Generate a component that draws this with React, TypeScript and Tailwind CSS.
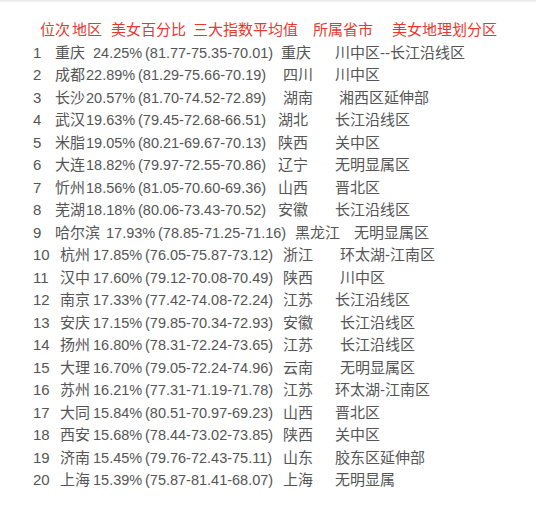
import React from "react";

type Row = [number, string, string, string, string, string, number, number, number, number, number];

const rows: Row[] = [
  [1, "重庆", "24.25%", "(81.77-75.35-70.01)", "重庆", "川中区--长江沿线区", 55, 93, 145, 281, 335],
  [2, "成都", "22.89%", "(81.29-75.66-70.19)", "四川", "川中区", 55, 86, 138, 283, 335],
  [3, "长沙", "20.57%", "(81.70-74.52-72.89)", "湖南", "湘西区延伸部", 55, 86, 138, 283, 339],
  [4, "武汉", "19.63%", "(79.45-72.68-66.51)", "湖北", "长江沿线区", 55, 86, 138, 278, 335],
  [5, "米脂", "19.05%", "(80.21-69.67-70.13)", "陕西", "关中区", 55, 86, 138, 278, 335],
  [6, "大连", "18.82%", "(79.97-72.55-70.86)", "辽宁", "无明显属区", 55, 86, 138, 278, 335],
  [7, "忻州", "18.56%", "(81.05-70.60-69.36)", "山西", "晋北区", 55, 86, 138, 278, 335],
  [8, "芜湖", "18.18%", "(80.06-73.43-70.52)", "安徽", "长江沿线区", 55, 86, 138, 278, 335],
  [9, "哈尔滨", "17.93%", "(78.85-71.25-71.16)", "黑龙江", "无明显属区", 55, 106, 158, 295, 354],
  [10, "杭州", "17.85%", "(76.05-75.87-73.12)", "浙江", "环太湖-江南区", 60, 93, 145, 283, 340],
  [11, "汉中", "17.60%", "(79.12-70.08-70.49)", "陕西", "川中区", 60, 93, 145, 283, 340],
  [12, "南京", "17.33%", "(77.42-74.08-72.24)", "江苏", "长江沿线区", 60, 93, 145, 283, 335],
  [13, "安庆", "17.15%", "(79.85-70.34-72.93)", "安徽", "长江沿线区", 60, 93, 145, 283, 340],
  [14, "扬州", "16.80%", "(78.31-72.24-73.65)", "江苏", "长江沿线区", 60, 93, 145, 283, 340],
  [15, "大理", "16.70%", "(79.05-72.24-74.96)", "云南", "无明显属区", 60, 93, 145, 283, 340],
  [16, "苏州", "16.21%", "(77.31-71.19-71.78)", "江苏", "环太湖-江南区", 60, 93, 145, 283, 335],
  [17, "大同", "15.84%", "(80.51-70.97-69.23)", "山西", "晋北区", 60, 93, 145, 283, 335],
  [18, "西安", "15.68%", "(78.44-73.02-73.85)", "陕西", "关中区", 60, 93, 145, 283, 335],
  [19, "济南", "15.45%", "(79.76-72.43-75.11)", "山东", "胶东区延伸部", 60, 93, 145, 283, 335],
  [20, "上海", "15.39%", "(75.87-81.41-68.07)", "上海", "无明显属", 60, 93, 145, 283, 335],
];

export default function App() {
  return (
    <div
      className="w-[536px] h-[506px] bg-white overflow-hidden text-[15px] leading-[22.5px] text-[#555555]"
      style={{ fontFamily: '"Liberation Sans", "Noto Sans CJK SC", sans-serif' }}
    >
      <div className="h-[3px] bg-gradient-to-b from-[#e6e6e6] to-white" />
      <div className="pt-[16px] pl-[40px] flex text-[#e5392f] whitespace-nowrap">
        <span className="w-[32px]">位次</span>
        <span className="w-[39px]">地区</span>
        <span className="w-[82px]">美女百分比</span>
        <span className="w-[120px]">三大指数平均值</span>
        <span className="w-[79px]">所属省市</span>
        <span>美女地理划分区</span>
      </div>
      <div className="pl-[33px] flex flex-col">
        {rows.map((r) => {
          const [n, city, pct, paren, prov, region, cx, px, parx, provx, regx] = r;
          return (
            <div key={n} className="flex items-baseline whitespace-nowrap">
              <span className="shrink-0" style={{ width: cx - 33 }}>{n}</span>
              <span className="shrink-0" style={{ width: px - cx }}>{city}</span>
              <span className="shrink-0 text-[14.5px]" style={{ width: parx - px }}>{pct}</span>
              <span className="shrink-0 text-[14.5px]" style={{ width: provx - parx }}>{paren}</span>
              <span className="shrink-0" style={{ width: regx - provx }}>{prov}</span>
              <span>{region}</span>
            </div>
          );
        })}
      </div>
    </div>
  );
}
